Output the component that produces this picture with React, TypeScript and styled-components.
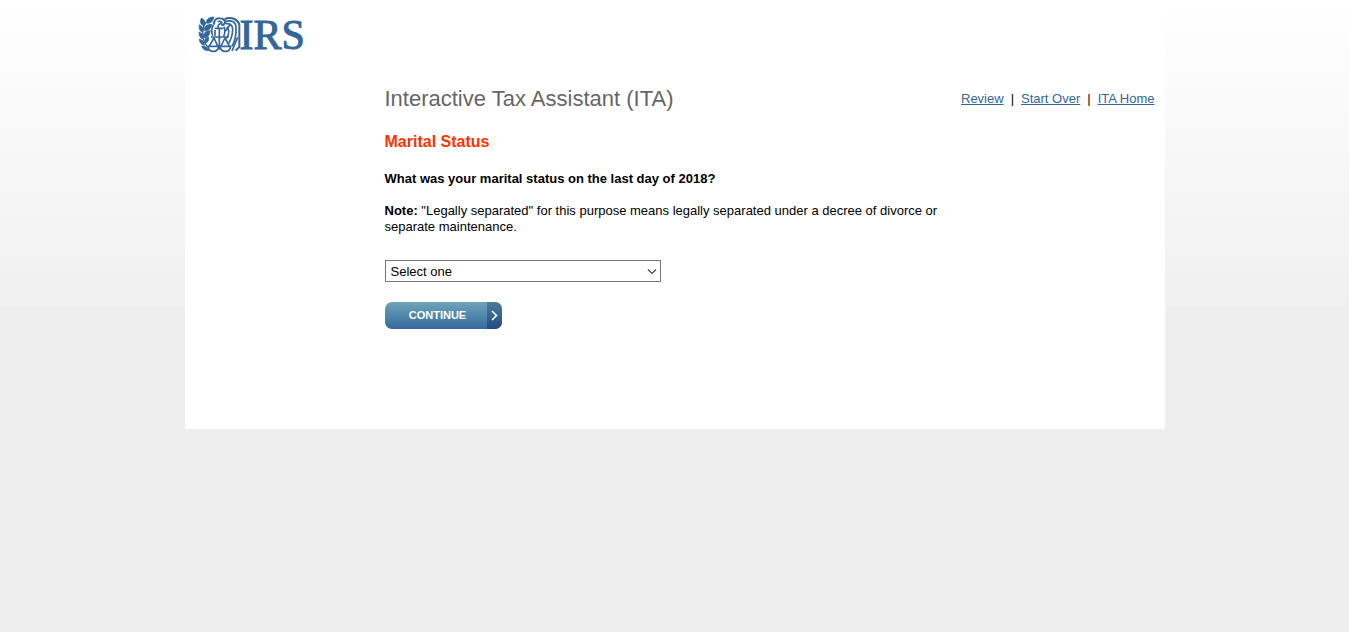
import React from "react";
import styled, { createGlobalStyle } from "styled-components";

const GlobalStyle = createGlobalStyle`
  * { box-sizing: border-box; }
  body {
    margin: 0;
    color: #000;
    background: #eee linear-gradient(#fff, #f0f0f0) 0 0 / 100% 306px no-repeat;
    font: 13px/16px "Liberation Sans", Arial, sans-serif;
  }
  h1, h2, p { margin: 0; }
`;

const Page = styled.div`
  max-width: 980px;
  margin: 0 auto;
  padding-bottom: 100px;
  background: #fff;
`;

const Header = styled.header`
  display: flex;
  padding: 14px 12px 0;
`;

const LogoLink = styled.a`
  display: flex;
  align-items: center;
  height: 42px;
  color: #336699;
  text-decoration: none;
`;

const LogoText = styled.span`
  margin-left: -3px;
  font: 42px/42px "Liberation Serif", "Times New Roman", serif;
  -webkit-text-stroke: 1px currentColor;
`;

const Main = styled.main`
  padding: 30px 10px 0 200px;
`;

const TitleRow = styled.div`
  display: flex;
  justify-content: space-between;
  align-items: center;
`;

const Title = styled.h1`
  color: #666;
  font-size: 22px;
  line-height: 26px;
  font-weight: 400;
`;

const Nav = styled.nav`
  display: flex;
  gap: 7px;
`;

const NavLink = styled.a`
  color: #336699;
`;

const Section = styled.h2`
  margin-top: 20px;
  color: #ff3300;
  font-size: 16px;
  line-height: 20px;
`;

const Form = styled.form`
  display: flex;
  flex-direction: column;
  align-items: flex-start;
  max-width: 570px;
`;

const Question = styled.label`
  margin-top: 19px;
  font-weight: 700;
`;

const Note = styled.p`
  margin-top: 16px;
`;

const SelectBox = styled.div`
  position: relative;
  width: 276px;
  margin-top: 25px;
`;

const Select = styled.select`
  display: block;
  width: 100%;
  height: 22px;
  padding: 1px 20px 0 5px;
  appearance: none;
  border: 1px solid #767676;
  border-radius: 0;
  background: #fff;
  color: #000;
  font: inherit;
`;

const SelectArrow = styled.svg`
  position: absolute;
  right: 4px;
  top: 8px;
  pointer-events: none;
`;

const Continue = styled.button`
  display: flex;
  width: 117px;
  height: 27px;
  margin-top: 20px;
  padding: 0;
  overflow: hidden;
  border: 0;
  border-radius: 7px;
  background: linear-gradient(#6fa3b8, #5088aa 50%, #38689f);
  color: #fff;
  font: bold 11px/27px "Liberation Sans", Arial, sans-serif;
`;

const ContinueText = styled.span`
  flex: 1;
  padding-left: 4px;
  text-align: center;
`;

const ContinueArrow = styled.span`
  display: flex;
  align-items: center;
  justify-content: center;
  width: 15px;
  height: 27px;
  background: linear-gradient(#4d7b9b, #234a83);
`;

const Emblem = () => (
  <svg width="46" height="42" viewBox="3 0 138 126" fill="none" stroke="currentColor" aria-hidden="true">
    <g fill="currentColor" strokeWidth="2">
      <path d="M32 28C29 16 38 9 54 9C52 21 44 29 32 28Z" />
      <path d="M24 36C12 31 10 21 17 12C27 18 30 27 24 36Z" />
      <path d="M20 55C10 51 8 42 10 32C21 38 24 45 20 55Z" />
      <path d="M25 50C24 38 32 30 48 31C45 44 37 52 25 50Z" />
      <path d="M19 75C11 71 9 64 9 54C20 59 23 65 19 75Z" />
      <path d="M22 71C21 58 28 50 43 50C41 64 34 72 22 71Z" />
      <path d="M25 94C15 92 10 85 10 75C21 78 27 84 25 94Z" />
      <path d="M27 87C24 78 28 71 37 68C40 79 37 85 27 87Z" />
      <path d="M38 110C27 111 20 105 17 96C28 95 35 100 38 110Z" />
    </g>
    <path d="M30 24C17 42 15 77 36 100" strokeWidth="4" />
    <path d="M54 32C53 20 60 12 71 13C82 13 87 19 87 28L81 33L75 30" strokeWidth="6" />
    <path d="M65 24C68 21 74 22 77 25L68 32L65 42" strokeWidth="5" />
    <path d="M52 33C46 43 46 54 50 65M57 48V65M84 38C88 48 87 58 83 67" strokeWidth="5" />
    <path d="M56 43H82M70 43V76" strokeWidth="5" />
    <path d="M86 15C107 7 124 16 130 31V99L119 110" strokeWidth="6" />
    <path d="M88 22C109 17 119 25 120 39C121 60 118 80 108 97" strokeWidth="5" />
    <path d="M90 29C105 28 111 37 110 48C109 64 106 75 98 88" strokeWidth="5" />
    <path d="M92 39C99 44 101 56 92 74M104 29L88 52M125 70L108 111" strokeWidth="5" />
    <path d="M45 69H98M54 72L39 98M54 72L66 98M87 72L74 98M87 72L101 98M70 71V107" strokeWidth="5" />
    <path d="M36 97H68C67 107 61 112 52 112S37 107 36 97ZM72 97H104C103 107 97 112 88 112S73 107 72 97Z" strokeWidth="5" />
  </svg>
);

export default function App() {
  return (
    <>
      <GlobalStyle />
      <Page>
        <Header>
          <LogoLink href="#home">
            <Emblem />
            <LogoText>IRS</LogoText>
          </LogoLink>
        </Header>
        <Main>
          <TitleRow>
            <Title>Interactive Tax Assistant (ITA)</Title>
            <Nav>
              <NavLink href="#review">Review</NavLink>
              <span>|</span>
              <NavLink href="#start">Start Over</NavLink>
              <span>|</span>
              <NavLink href="#ita">ITA Home</NavLink>
            </Nav>
          </TitleRow>
          <Section>Marital Status</Section>
          <Form onSubmit={(e: React.FormEvent) => e.preventDefault()}>
            <Question htmlFor="status">What was your marital status on the last day of 2018?</Question>
            <Note>
              <b>Note:</b> "Legally separated" for this purpose means legally separated under a decree of
              divorce or separate maintenance.
            </Note>
            <SelectBox>
              <Select id="status">
                <option>Select one</option>
              </Select>
              <SelectArrow width="10" height="7" viewBox="0 0 10 7" fill="none" stroke="#444" strokeWidth="1.2">
                <path d="M1 1.5L5 5.5L9 1.5" />
              </SelectArrow>
            </SelectBox>
            <Continue type="submit">
              <ContinueText>CONTINUE</ContinueText>
              <ContinueArrow>
                <svg width="7" height="11" viewBox="0 0 7 11" fill="none" stroke="#fff" strokeWidth="1.6">
                  <path d="M1 1L5.5 5.5L1 10" />
                </svg>
              </ContinueArrow>
            </Continue>
          </Form>
        </Main>
      </Page>
    </>
  );
}
